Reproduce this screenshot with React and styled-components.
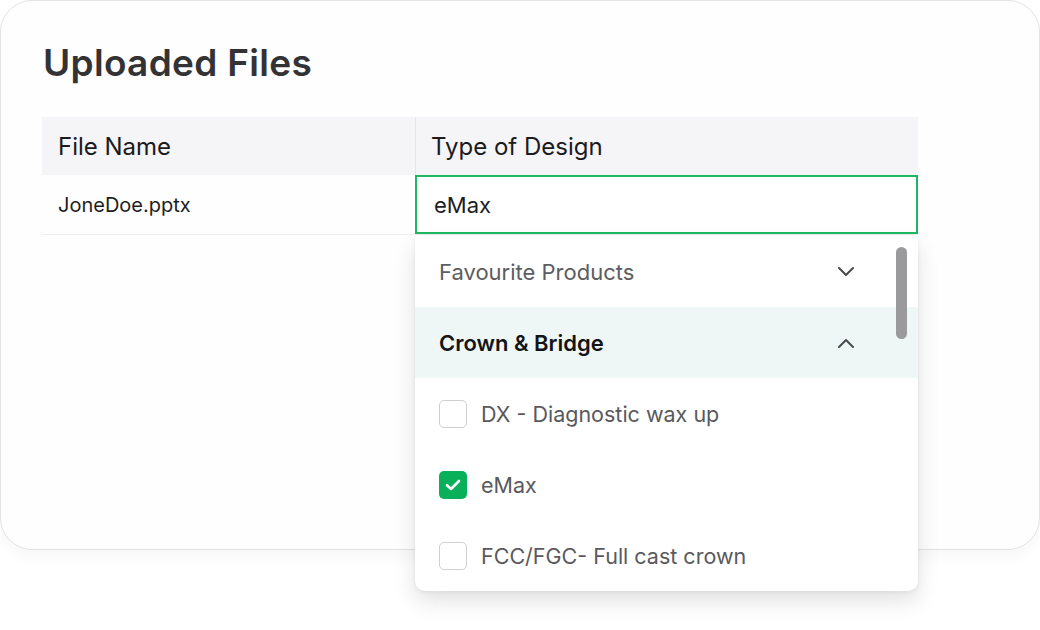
import React from "react";
import styled, { createGlobalStyle } from "styled-components";

const Global = createGlobalStyle`
  html, body { margin: 0; padding: 0; background: #ffffff; }
  body { font-family: Inter, "Noto Sans", sans-serif; -webkit-font-smoothing: antialiased; }
  * { box-sizing: border-box; }
`;

const Page = styled.div`
  width: 1040px;
  min-height: 630px;
`;

const Card = styled.div`
  width: 1040px;
  height: 550px;
  border: 1.5px solid #e3e3e7;
  border-radius: 32px;
  background: #fefefe;
  padding: 39px 42px 0 41px;
  box-shadow: 0 8px 14px rgba(0, 0, 0, 0.03);
`;

const Title = styled.h1`
  margin: 0 0 31px 1px;
  font-size: 37px;
  line-height: 46px;
  font-weight: 600;
  color: #333336;
  letter-spacing: 0.3px;
`;

const Table = styled.div`
  display: grid;
  grid-template-columns: 373px 503px;
  width: 876px;
`;

const HeadCell = styled.div`
  height: 58px;
  background: #f5f4f7;
  display: flex;
  align-items: center;
  padding-left: ${(p) => p.$pad}px;
  font-size: 24px;
  color: #1b1b1d;
  border-left: ${(p) => (p.$divider ? "1px solid #e6e5ea" : "none")};
`;

const BodyCell = styled.div`
  position: relative;
  height: 60px;
  display: flex;
  align-items: center;
  padding-left: ${(p) => p.$pad}px;
  font-size: 20px;
  color: #1d1d1f;
  border-bottom: 1px solid #efeff1;
`;

const InputBox = styled.div`
  width: 503px;
  height: 59px;
  border: 2px solid #1db864;
  display: flex;
  align-items: center;
  padding-left: 17px;
  font-size: 22px;
  color: #1d1d1f;
  background: #fff;
`;

const Dropdown = styled.div`
  position: absolute;
  top: 61px;
  left: 0;
  width: 503px;
  height: 355px;
  background: #fff;
  border-radius: 0 0 10px 10px;
  box-shadow: 0 10px 22px rgba(0, 0, 0, 0.12), 0 1px 4px rgba(0, 0, 0, 0.06);
  overflow: hidden;
  z-index: 2;
`;

const Scrollbar = styled.div`
  position: absolute;
  right: 11px;
  top: 11px;
  width: 11px;
  height: 92px;
  border-radius: 6px;
  background: #9a999c;
`;

const GroupRow = styled.div`
  height: 71px;
  display: flex;
  align-items: center;
  justify-content: space-between;
  padding: 0 62px 0 24px;
  background: ${(p) => (p.$open ? "#eef7f5" : "transparent")};
  font-size: 22px;
  font-weight: ${(p) => (p.$open ? 600 : 400)};
  color: ${(p) => (p.$open ? "#141416" : "#5d5c60")};
`;

const OptionRow = styled.div`
  height: 71px;
  display: flex;
  align-items: center;
  gap: 14px;
  padding-left: 24px;
  font-size: 21.5px;
  color: #5a595d;
`;

const Box = styled.div`
  width: 28px;
  height: 28px;
  border-radius: 5px;
  border: ${(p) => (p.$checked ? "none" : "1.5px solid #cfcfd3")};
  background: ${(p) => (p.$checked ? "#08b159" : "#fff")};
  display: flex;
  align-items: center;
  justify-content: center;
  flex-shrink: 0;
`;

const Chevron = ({ up }) => (
  <svg width="20" height="12" viewBox="0 0 20 12" fill="none">
    <path
      d={up ? "M3 10 L10 3 L17 10" : "M3 2 L10 9 L17 2"}
      stroke="#4a4a4e"
      strokeWidth="2"
      strokeLinecap="round"
      strokeLinejoin="round"
    />
  </svg>
);

const Check = () => (
  <svg width="16" height="12" viewBox="0 0 16 12" fill="none">
    <path d="M2 6.2 L6 10 L14 2" stroke="#fff" strokeWidth="2.6" strokeLinecap="round" strokeLinejoin="round" />
  </svg>
);

const options = [
  { label: "DX - Diagnostic wax up", checked: false },
  { label: "eMax", checked: true },
  { label: "FCC/FGC- Full cast crown", checked: false },
];

export default function App() {
  return (
    <Page>
      <Global />
      <Card>
        <Title>Uploaded Files</Title>
        <Table>
          <HeadCell $pad={16}>File Name</HeadCell>
          <HeadCell $pad={15} $divider>Type of Design</HeadCell>
          <BodyCell $pad={16}>JoneDoe.pptx</BodyCell>
          <BodyCell $pad={0}>
            <InputBox>eMax</InputBox>
            <Dropdown>
              <Scrollbar />
              <GroupRow>
                <span>Favourite Products</span>
                <Chevron />
              </GroupRow>
              <GroupRow $open>
                <span>Crown &amp; Bridge</span>
                <Chevron up />
              </GroupRow>
              {options.map((o) => (
                <OptionRow key={o.label}>
                  <Box $checked={o.checked}>{o.checked && <Check />}</Box>
                  <span>{o.label}</span>
                </OptionRow>
              ))}
            </Dropdown>
          </BodyCell>
        </Table>
      </Card>
    </Page>
  );
}
